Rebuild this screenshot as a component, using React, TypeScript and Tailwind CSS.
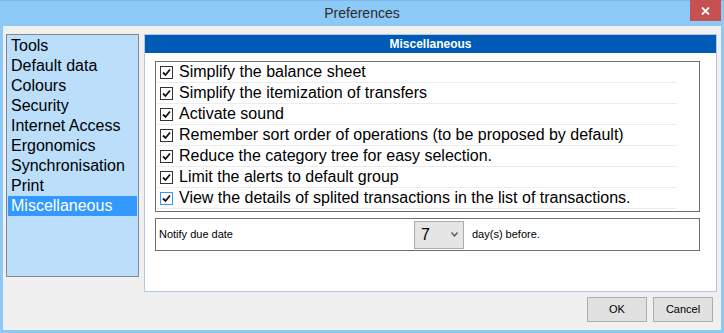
import React from "react"

const sections = [
  "Tools",
  "Default data",
  "Colours",
  "Security",
  "Internet Access",
  "Ergonomics",
  "Synchronisation",
  "Print",
  "Miscellaneous",
]

const options = [
  "Simplify the balance sheet",
  "Simplify the itemization of transfers",
  "Activate sound",
  "Remember sort order of operations (to be proposed by default)",
  "Reduce the category tree for easy selection.",
  "Limit the alerts to default group",
  "View the details of splited transactions in the list of transactions.",
]

function CheckBox({ focused }: { focused?: boolean }) {
  return (
    <div
      className={
        focused
          ? "w-[13px] h-[13px] border border-[#3399ff] bg-white flex items-center justify-center shrink-0"
          : "w-[13px] h-[13px] border border-[#333333] bg-white flex items-center justify-center shrink-0"
      }
    >
      <svg width="9" height="9" viewBox="0 0 9 9">
        <path d="M1 4.5 L3.5 7 L8 1.5" fill="none" stroke="#111" strokeWidth="1.8" />
      </svg>
    </div>
  )
}

export default function App() {
  return (
    <div
      className="w-[724px] h-[333px] bg-[#8dc9f7] flex flex-col px-[3px] pb-[3px] border-t border-[#7ab8ea]"
      style={{ fontFamily: '"Liberation Sans", Arial, sans-serif' }}
    >
      {/* Title bar */}
      <div className="relative h-[25px] flex items-center justify-center">
        <span className="text-[14px] text-[#2b2b2b]">Preferences</span>
        <div className="absolute right-0 top-[-1px] w-[31px] h-[21px] bg-[#c75050] flex items-center justify-center">
          <svg width="9" height="8" viewBox="0 0 9 8">
            <path d="M1 0.5 L8 7.5 M8 0.5 L1 7.5" stroke="white" strokeWidth="1.8" />
          </svg>
        </div>
      </div>

      {/* Client area */}
      <div className="flex-1 bg-[#f0f0f0] flex flex-col pt-[8px] pl-[3px] pr-[4px]">
        <div className="flex gap-[5px]">
          {/* Section list */}
          <div className="w-[133px] h-[243px] border border-[#828790] bg-[#bbdefb] p-px">
            {sections.map((s) => (
              <div
                key={s}
                className={
                  s === "Miscellaneous"
                    ? "h-[20px] pl-[3px] flex items-center text-[16px] bg-[#3399ff] text-white"
                    : "h-[20px] pl-[3px] flex items-center text-[16px] text-black"
                }
              >
                {s}
              </div>
            ))}
          </div>

          {/* Settings panel */}
          <div className="w-[573px] h-[258px] border border-[#b4c6d8] bg-white flex flex-col">
            <div className="h-[18px] bg-[#005bb7] flex items-center justify-center">
              <span className="text-[12px] font-bold text-white">Miscellaneous</span>
            </div>

            <div className="ml-[10px] mt-[8px] w-[545px] border border-[#6e6e6e] pb-[2px]">
              {options.map((o, i) => (
                <div
                  key={o}
                  className="ml-px w-[520px] h-[21px] border-b border-[#ececec] flex items-center pl-[3px] gap-[6px]"
                >
                  <CheckBox focused={i === options.length - 1} />
                  <span className="text-[16px] text-black whitespace-nowrap">{o}</span>
                </div>
              ))}
            </div>

            <div className="ml-[10px] mt-[6px] w-[545px] h-[33px] border border-[#6e6e6e] flex items-center pl-[3px]">
              <span className="w-[255px] text-[11px] text-black">Notify due date</span>
              <div className="w-[50px] h-[28px] border border-[#acacac] bg-[#e5e5e5] flex items-center justify-between pl-[6px] pr-[5px]">
                <span className="text-[16px] text-black">7</span>
                <svg width="7" height="5" viewBox="0 0 7 5">
                  <path d="M0.5 0.5 L3.5 4 L6.5 0.5" fill="none" stroke="#555" strokeWidth="1.3" />
                </svg>
              </div>
              <span className="ml-[8px] text-[11px] text-black">day(s) before.</span>
            </div>
          </div>
        </div>

        {/* Buttons */}
        <div className="flex justify-end gap-[6px] mt-[5px] pr-[4px]">
          <button className="w-[60px] h-[25px] border border-[#adadad] bg-[#e1e1e1] text-[11px] text-black">
            OK
          </button>
          <button className="w-[60px] h-[25px] border border-[#adadad] bg-[#e1e1e1] text-[11px] text-black">
            Cancel
          </button>
        </div>
      </div>
    </div>
  )
}
